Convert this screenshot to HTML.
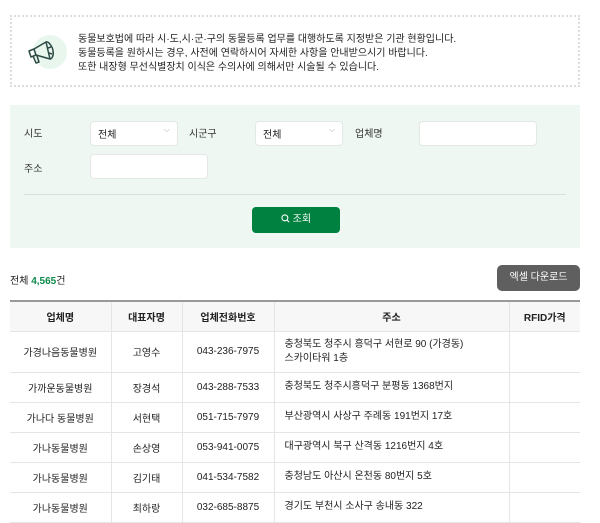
<!DOCTYPE html>
<html><head><meta charset="utf-8"><style>
*{box-sizing:border-box;margin:0;padding:0}
body{width:600px;height:507px;overflow:hidden;background:#fff;font-family:"Liberation Sans","Noto Sans CJK KR",sans-serif;color:#222;position:relative}
.abs{position:absolute}
.notice{left:10px;top:15px;width:570px;height:72px;border:2px dotted #ddd}
.notice p{position:absolute;left:66px;font-size:10px;color:#222;white-space:nowrap}
.circ{left:21px;top:18px;width:34px;height:34px;border-radius:50%;background:#e8f6ee}
.filter{left:10px;top:105px;width:570px;height:143px;background:#eef7f1}
.lbl{font-size:10px;color:#333}
.sel{background:#fff;border:1px solid #e3e8e5;border-radius:4px;height:25px;font-size:10px;padding:4px 0 0 7px}
.sel span{position:absolute;right:7px;top:3px;color:#aaa;font-size:8px}
.btn{background:#008140;color:#fff;border-radius:4px;font-size:10px;text-align:center;line-height:26px}
table{position:absolute;left:10px;top:300px;width:570px;border-collapse:collapse;border-top:2px solid #999;font-size:10px}
th{background:#f7f7f7;height:30px;font-weight:bold;color:#222;border-left:1px solid #e5e5e5;border-bottom:1px solid #e5e5e5}
td{height:30px;text-align:center;border-left:1px solid #e5e5e5;border-bottom:1px solid #e5e5e5;color:#222}
th:first-child,td:first-child{border-left:none}
td.a{text-align:left;padding-left:10px;line-height:14px}
</style></head><body>
<div class="abs notice">
<div class="abs circ"></div>
<svg class="abs" style="left:12px;top:20px" width="32" height="30" viewBox="0 0 32 30" fill="none" stroke="#2d4a44" stroke-width="1.5" stroke-linejoin="round"><path d="M5 14 L10 12 L12 18 L7 20 Z"/><path d="M10 12 L22 5 L26 22 L12 18"/><path d="M22 5 C25 4 29 11 29 14 C30 18 28 22 26 22"/><path d="M24 11 L27 10 M25 16 L28 17"/><path d="M9 19 L12 26 L15 25 L13 19"/></svg>
<p style="top:13px">동물보호법에 따라 시·도,시·군·구의 동물등록 업무를 대행하도록 지정받은 기관 현황입니다.</p>
<p style="top:27px">동물등록을 원하시는 경우, 사전에 연락하시어 자세한 사항을 안내받으시기 바랍니다.</p>
<p style="top:41px">또한 내장형 무선식별장치 이식은 수의사에 의해서만 시술될 수 있습니다.</p>
</div>
<div class="abs filter"></div>
<div class="abs lbl" style="left:24px;top:125px">시도</div>
<div class="abs sel" style="left:90px;top:121px;width:88px">전체<span>⌵</span></div>
<div class="abs lbl" style="left:189px;top:125px">시군구</div>
<div class="abs sel" style="left:255px;top:121px;width:88px">전체<span>⌵</span></div>
<div class="abs lbl" style="left:355px;top:125px">업체명</div>
<div class="abs sel" style="left:419px;top:121px;width:118px"></div>
<div class="abs lbl" style="left:24px;top:160px">주소</div>
<div class="abs sel" style="left:90px;top:154px;width:118px"></div>
<div class="abs" style="left:24px;top:194px;width:542px;height:1px;background:#d6e3db"></div>
<div class="abs btn" style="left:252px;top:207px;width:88px;height:26px"><svg width="9" height="9" viewBox="0 0 10 10" style="vertical-align:-1px" fill="none" stroke="#fff" stroke-width="1.2"><circle cx="4.3" cy="4.3" r="3.3"/><path d="M6.8 6.8L9 9"/></svg> 조회</div>
<div class="abs" style="left:10px;top:272px;font-size:10px">전체 <b style="color:#0a8a48">4,565</b>건</div>
<div class="abs" style="left:497px;top:265px;width:83px;height:26px;background:#5f5f5f;border-radius:5px;color:#fff;font-size:10px;text-align:center;line-height:26px">엑셀 다운로드</div>
<table>
<tr><th style="width:101px">업체명</th><th style="width:71px">대표자명</th><th style="width:92px">업체전화번호</th><th style="width:235px">주소</th><th>RFID가격</th></tr>
<tr><td style="height:41px">가경나음동물병원</td><td>고영수</td><td>043-236-7975</td><td class="a">충청북도 청주시 흥덕구 서현로 90 (가경동)<br>스카이타워 1층</td><td></td></tr>
<tr><td>가까운동물병원</td><td>장경석</td><td>043-288-7533</td><td class="a">충청북도 청주시흥덕구 분평동 1368번지</td><td></td></tr>
<tr><td>가나다 동물병원</td><td>서현택</td><td>051-715-7979</td><td class="a">부산광역시 사상구 주례동 191번지 17호</td><td></td></tr>
<tr><td>가나동물병원</td><td>손상영</td><td>053-941-0075</td><td class="a">대구광역시 북구 산격동 1216번지 4호</td><td></td></tr>
<tr><td>가나동물병원</td><td>김기태</td><td>041-534-7582</td><td class="a">충청남도 아산시 온천동 80번지 5호</td><td></td></tr>
<tr><td>가나동물병원</td><td>최하랑</td><td>032-685-8875</td><td class="a">경기도 부천시 소사구 송내동 322</td><td></td></tr>
</table>
</body></html>
